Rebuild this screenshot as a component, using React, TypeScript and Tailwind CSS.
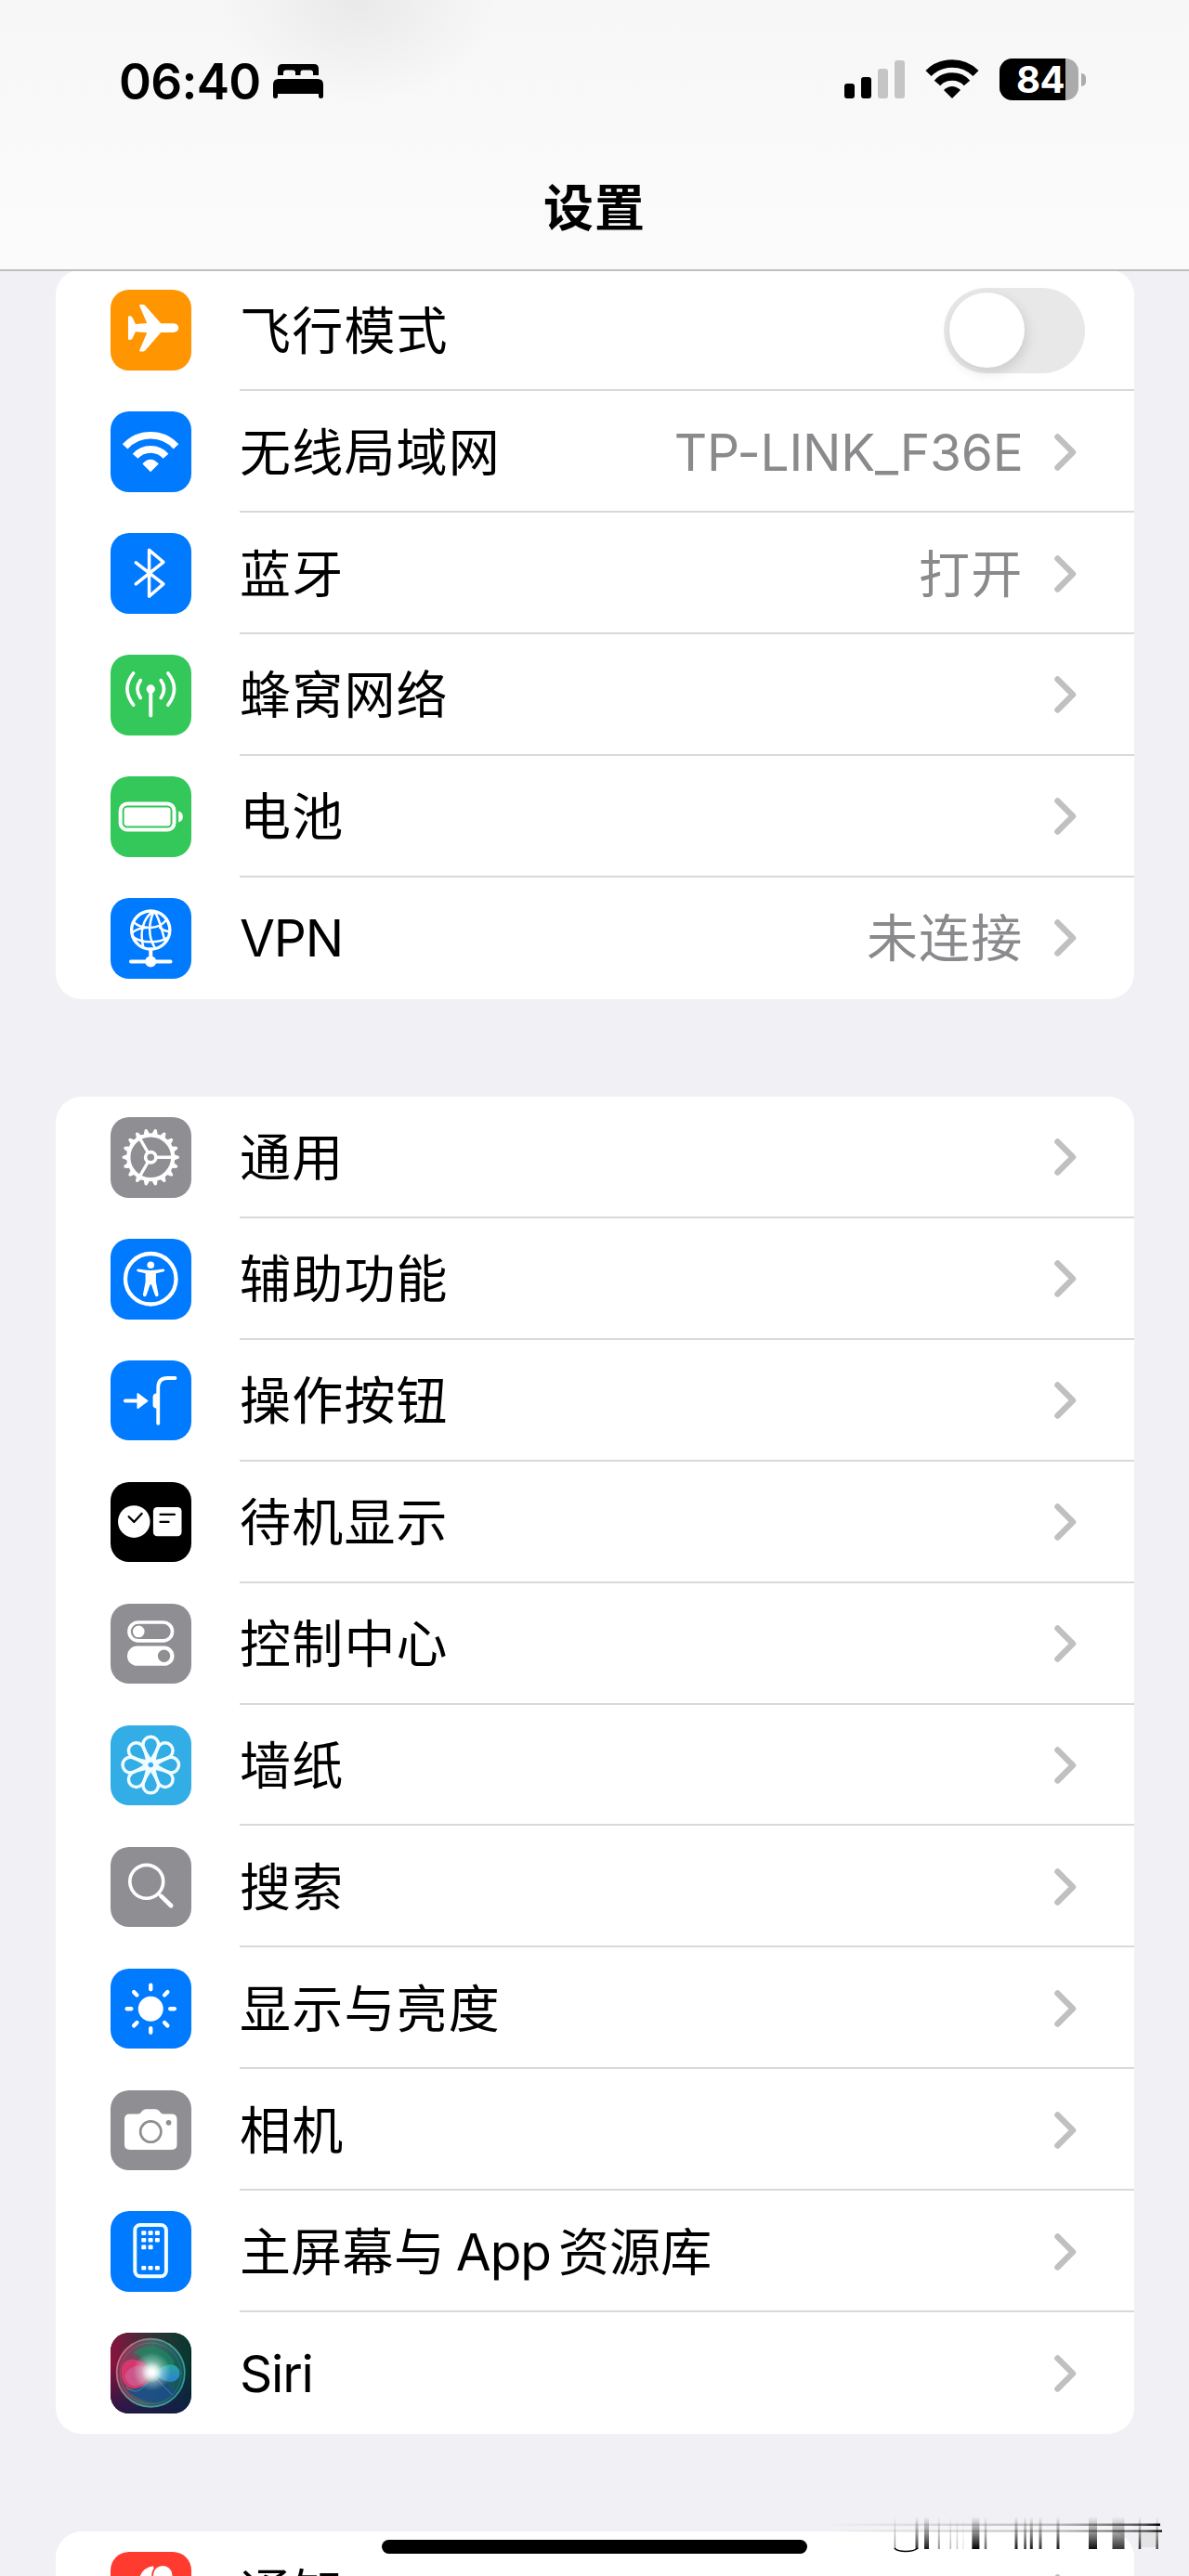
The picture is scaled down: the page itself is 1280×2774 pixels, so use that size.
import type { ReactNode } from "react";

const BLUE = "bg-[#007aff]";
const GREEN = "bg-[#34c759]";
const GRAY = "bg-[#8e8e93]";

function Tile({ color, children }: { color: string; children: ReactNode }) {
  return (
    <div className={`size-[86.5px] shrink-0 overflow-hidden rounded-[20px] ${color}`}>
      <svg viewBox="0 0 260 260" className="block size-full" fill="none" strokeLinecap="round" strokeLinejoin="round">
        {children}
      </svg>
    </div>
  );
}

const W = "#fff";

const Airplane = () => (
  <path
    fill={W}
    d="M204 109H163L112 51Q109 48 105 48H97Q92 48 94 53L118 108L81 111L71 90Q69 85 63 85H60Q57 85 57 89V158Q57 162 60 162H63Q69 162 71 157L81 136L118 139L94 195Q92 200 97 200H105Q109 200 112 197L163 138H204Q220 136 220 124Q220 111 204 109Z"
  />
);

const Wifi = () => (
  <>
    <g stroke={W} strokeWidth="23" strokeLinecap="butt">
      <path d="M47 114A111 111 0 0 1 212 114" />
      <path d="M80 145A66 66 0 0 1 179 145" />
    </g>
    <path fill={W} stroke={W} strokeWidth="4" d="M106 170Q129 145 153 170L129.500 193Z" />
  </>
);

const Bluetooth = () => <path stroke={W} strokeWidth="10.500" d="M82 96L171 165L125 205V55L171 94L82 165" />;

const Cellular = () => (
  <g stroke={W}>
    <circle cx="130" cy="111" r="14" fill={W} stroke="none" />
    <path strokeWidth="12" d="M130 115V197" />
    <path strokeWidth="11" d="M97 83Q77 111 97 140M163 83Q183 111 163 140" />
    <path strokeWidth="11" d="M74 60Q34 111 74 163M186 60Q226 111 186 163" />
  </g>
);

const Battery = () => (
  <>
    <rect x="32" y="89" width="174" height="84" rx="22" stroke={W} strokeWidth="12" />
    <rect x="44" y="101" width="150" height="60" rx="10" fill={W} />
    <path fill={W} d="M220 113Q234 117 234 131T220 149Z" />
  </>
);

const Vpn = () => (
  <g stroke={W}>
    <circle cx="130" cy="104" r="62" strokeWidth="10" />
    <g strokeWidth="7.500">
      <path d="M138 44C104 66 94 112 106 158" />
      <path d="M140 44C124 78 120 124 143 160" />
      <path d="M142 44C158 64 164 100 176 138" />
      <path d="M74 78C100 102 154 104 180 72" />
      <path d="M70 124C100 148 156 148 188 126" />
      <path d="M160 96Q176 108 188 108M70 112Q90 96 116 96" />
    </g>
    <path strokeWidth="12" d="M130 166V200M66 206H194" />
    <circle cx="130" cy="206" r="18" fill={W} stroke="none" />
  </g>
);

const TEETH = Array.from({ length: 18 }, (_, i) => i * 20);

const Gear = () => (
  <g stroke={W}>
    <circle cx="130" cy="130" r="72" strokeWidth="13" />
    {TEETH.map((a) => (
      <path key={a} transform={`rotate(${a} 130 130)`} d="M202 124H210L220 128V132L210 136H202Z" fill={W} stroke={W} strokeWidth="4" />
    ))}
    <circle cx="130" cy="130" r="17" strokeWidth="11" />
    {[0, 120, 240].map((a) => (
      <path key={a} transform={`rotate(${a} 130 130)`} d="M150 130H198" strokeWidth="10" strokeLinecap="butt" />
    ))}
  </g>
);

const Accessibility = () => (
  <>
    <circle cx="130" cy="130" r="82" stroke={W} strokeWidth="13" />
    <circle cx="130" cy="85" r="11.500" fill={W} />
    <path
      fill={W}
      d="M90 98Q110 102 130 102T170 98Q176 98 175 103Q175 106 170 107L147 112V140L155 180Q155 188 148 187Q145 186 143 180L132 148H128L117 180Q115 186 112 187Q105 188 105 180L113 140V112L90 107Q85 106 85 103Q84 98 90 98Z"
    />
  </>
);

const ActionButton = () => (
  <>
    <path stroke={W} strokeWidth="12" d="M48 131H92" />
    <path fill={W} stroke={W} strokeWidth="5" d="M88 108V154L119 131Z" />
    <path stroke={W} strokeWidth="11.500" d="M154 204V88Q154 57 184 57H209" />
    <path fill={W} d="M150 107H146Q137 110 137 118V144Q137 152 146 155H150Z" />
  </>
);

const Standby = () => (
  <>
    <circle cx="76" cy="128" r="52" fill={W} />
    <rect x="138" y="81" width="92" height="94" rx="13" fill={W} />
    <g stroke="#000" strokeWidth="7">
      <path d="M59 112L76 129L101 102" />
      <path d="M161 105H207M161 129H188" />
    </g>
  </>
);

const ControlCenter = () => (
  <>
    <rect x="60" y="60" width="140" height="60" rx="30" stroke={W} strokeWidth="11" />
    <circle cx="91" cy="90" r="19" fill={W} />
    <rect x="54" y="137" width="152" height="64" rx="32" fill={W} />
    <circle cx="173" cy="169" r="20" fill="#8e8e93" />
  </>
);

const PETALS = Array.from({ length: 8 }, (_, i) => i * 45);

const Wallpaper = () => (
  <g transform="translate(130 128)" stroke="#f0fcff" strokeWidth="10.500">
    {PETALS.map((a) => (
      <path key={a} transform={`rotate(${a})`} d="M0 -13C-10 -32 -25 -48 -25 -66A25 25 0 0 1 25 -66C25 -48 10 -32 0 -13Z" />
    ))}
    <circle r="13" strokeWidth="6" />
  </g>
);

const Search = () => (
  <g stroke={W}>
    <circle cx="116.500" cy="112" r="54" strokeWidth="11" />
    <path strokeWidth="9" d="M155 151L165 161" />
    <path strokeWidth="14" d="M164 159L196 190" />
  </g>
);

const Sun = () => (
  <>
    <circle cx="130" cy="130" r="40.500" fill={W} />
    {PETALS.map((a) => (
      <path key={a} transform={`rotate(${a} 130 130)`} stroke={W} strokeWidth="13" d="M130 67V53" />
    ))}
  </>
);

const Camera = () => (
  <>
    <path
      fill={W}
      d="M62 77H88Q94 77 98 72L103 66Q108 61 115 61H145Q152 61 157 66L162 72Q166 77 172 77H198Q215 77 215 94V175Q215 192 198 192H62Q45 192 45 175V94Q45 77 62 77Z"
    />
    <circle cx="130" cy="134" r="33.500" stroke="#8e8e93" strokeWidth="8" />
    <circle cx="188" cy="105" r="8.500" fill="#8e8e93" />
  </>
);

const DOTS = [
  [100, 64], [122, 64], [144, 64],
  [100, 87], [122, 87], [144, 87],
  [100, 110], [122, 110],
  [100, 177], [122, 177], [144, 177],
];

const HomeScreen = () => (
  <>
    <rect x="79" y="45" width="101" height="166" rx="17" stroke="#f0fcff" strokeWidth="12" />
    {DOTS.map(([x, y]) => (
      <rect key={`${x}-${y}`} x={x} y={y} width="15" height="14" rx="3" fill={W} />
    ))}
  </>
);

const Siri = () => (
  <>
    <defs>
      <linearGradient id="siriBase" x1="0" y1="0" x2="1" y2="0">
        <stop offset="0" stopColor="#8a123f" />
        <stop offset=".45" stopColor="#3a3038" />
        <stop offset="1" stopColor="#04392f" />
      </linearGradient>
      <linearGradient id="siriShade" x1="0" y1="0" x2="0" y2="1">
        <stop offset=".4" stopColor="#0a1238" stopOpacity="0" />
        <stop offset="1" stopColor="#14174f" stopOpacity=".8" />
      </linearGradient>
      <linearGradient id="siriOrb" x1="0" y1=".4" x2="1" y2=".6">
        <stop offset="0" stopColor="#a8345e" />
        <stop offset=".45" stopColor="#4d7d78" />
        <stop offset="1" stopColor="#0d6468" />
      </linearGradient>
      <linearGradient id="siriRing" x1="0" y1=".2" x2="1" y2=".7">
        <stop offset="0" stopColor="#e8708a" />
        <stop offset=".5" stopColor="#5fae9a" />
        <stop offset="1" stopColor="#3aa5b5" />
      </linearGradient>
      <linearGradient id="siriBlue" x1="0" y1="0" x2="0" y2="1">
        <stop offset="0" stopColor="#2aa8a0" />
        <stop offset="1" stopColor="#2c84d8" />
      </linearGradient>
      <radialGradient id="siriGlow">
        <stop offset="0" stopColor="#fff" />
        <stop offset=".3" stopColor="#fff" stopOpacity=".85" />
        <stop offset="1" stopColor="#c8fff0" stopOpacity="0" />
      </radialGradient>
    </defs>
    <rect width="260" height="260" fill="url(#siriBase)" />
    <rect width="260" height="260" fill="url(#siriShade)" />
    <circle cx="130" cy="130" r="110" fill="url(#siriOrb)" opacity=".7" />
    <path d="M72 64Q130 20 190 72Q226 108 180 112L130 128Q110 76 72 64Z" fill="#159061" opacity=".6" />
    <path d="M56 190Q110 170 160 150L212 190Q150 262 56 190Z" fill="#1a4d88" opacity=".85" />
    <path d="M134 128C112 84 44 68 36 116C30 160 52 180 82 180C110 180 124 150 134 128Z" fill="#e0356f" opacity=".9" />
    <path d="M134 128C112 96 60 100 46 140C60 186 100 186 134 128Z" fill="#c08fc0" opacity=".35" />
    <path d="M134 132C160 116 184 96 208 106C234 120 226 154 202 158C178 162 160 146 134 132Z" fill="url(#siriBlue)" opacity=".95" />
    <circle cx="130" cy="130" r="110" stroke="url(#siriRing)" strokeWidth="5" opacity=".85" />
    <circle cx="130" cy="132" r="99" stroke="#7ad0be" strokeWidth="2" opacity=".3" />
    <path d="M52 176Q92 218 134 134L198 200" stroke="#8bb8e8" strokeWidth="3" opacity=".45" />
    <circle cx="134" cy="126" r="62" fill="url(#siriGlow)" opacity=".75" />
    <circle cx="134" cy="128" r="34" fill="url(#siriGlow)" />
  </>
);

const Bell = () => (
  <>
    <path fill={W} d="M70 200Q84 140 92 90Q100 52 138 46L156 104V200Z" />
    <circle cx="169" cy="76" r="36" fill="#ff3b30" />
    <circle cx="169" cy="76" r="31" fill={W} />
  </>
);

type Item = { label: string; color: string; icon: ReactNode; value?: string; toggle?: boolean };

const connectivity: Item[] = [
  { label: "飞行模式", color: "bg-[#ff9500]", icon: <Airplane />, toggle: true },
  { label: "无线局域网", color: BLUE, icon: <Wifi />, value: "TP-LINK_F36E" },
  { label: "蓝牙", color: BLUE, icon: <Bluetooth />, value: "打开" },
  { label: "蜂窝网络", color: GREEN, icon: <Cellular /> },
  { label: "电池", color: GREEN, icon: <Battery /> },
  { label: "VPN", color: BLUE, icon: <Vpn />, value: "未连接" },
];

const general: Item[] = [
  { label: "通用", color: GRAY, icon: <Gear /> },
  { label: "辅助功能", color: BLUE, icon: <Accessibility /> },
  { label: "操作按钮", color: BLUE, icon: <ActionButton /> },
  { label: "待机显示", color: "bg-black", icon: <Standby /> },
  { label: "控制中心", color: GRAY, icon: <ControlCenter /> },
  { label: "墙纸", color: "bg-[#32ade6]", icon: <Wallpaper /> },
  { label: "搜索", color: GRAY, icon: <Search /> },
  { label: "显示与亮度", color: BLUE, icon: <Sun /> },
  { label: "相机", color: GRAY, icon: <Camera /> },
  { label: "主屏幕与 App 资源库", color: BLUE, icon: <HomeScreen /> },
  { label: "Siri", color: "bg-black", icon: <Siri /> },
];

const notifications: Item[] = [{ label: "通知", color: "bg-[#ff3b30]", icon: <Bell /> }];

function Label({ text }: { text: string }) {
  if (text.includes("App")) {
    const [before, after] = text.split(" App ");
    return (
      <span className="flex whitespace-nowrap">
        <span className="tracking-[0.3px]">{before}</span>
        <span className="ml-[11.5px] mr-[8px] tracking-[-1px]">App</span>
        <span className="tracking-[0.1px]">{after}</span>
      </span>
    );
  }
  const latin = /^[A-Za-z]/.test(text);
  return <span className={`whitespace-nowrap ${latin ? "tracking-[-1.2px]" : "tracking-[1.2px]"}`}>{text}</span>;
}

function Chevron() {
  return (
    <svg viewBox="0 0 24 40" className="ml-[33px] mr-[62.5px] h-[40px] w-[24px]" fill="none" stroke="#c0c0c2" strokeWidth="6.500" strokeLinecap="round" strokeLinejoin="round">
      <path d="M3.500 3.500L20 20L3.500 36.500" />
    </svg>
  );
}

function Toggle() {
  return (
    <div className="mr-[53.5px] flex h-[92px] w-[152px] items-center rounded-full bg-[#e8e8e9] px-[6px]">
      <div className="size-[81px] rounded-full bg-white shadow-[2px_5px_14px_rgba(0,0,0,0.13)]" />
    </div>
  );
}

function Row({ item, last }: { item: Item; last: boolean }) {
  const latinValue = item.value?.startsWith("TP");
  return (
    <div className="flex h-[130.93px] pl-[59px]">
      <div className="flex items-center">
        <Tile color={item.color}>{item.icon}</Tile>
      </div>
      <div className={`ml-[52.5px] flex flex-1 items-center text-[55px] leading-[80px] text-black ${last ? "" : "border-b-2 border-[#d9d9db] pt-[2px]"}`}>
        <Label text={item.label} />
        <div className="ml-auto flex items-center">
          {item.value && <span className={`whitespace-nowrap text-[#8a8a8d] ${latinValue ? "tracking-[-0.2px]" : "tracking-[1.2px]"}`}>{item.value}</span>}
          {item.toggle ? <Toggle /> : <Chevron />}
        </div>
      </div>
    </div>
  );
}

function Card({ items }: { items: Item[] }) {
  return (
    <section className="rounded-[28px] bg-white">
      {items.map((item, i) => (
        <Row key={item.label} item={item} last={i === items.length - 1} />
      ))}
    </section>
  );
}

function StatusBar() {
  return (
    <div className="flex h-[174px] items-start">
      <div className="ml-[128px] mt-[57.5px] w-[152px] whitespace-nowrap text-[53px] font-semibold leading-[60px] tracking-[-0.7px] text-black">06:40</div>
      <svg viewBox="0 0 54 37" className="ml-[14px] mt-[69px] h-[37px] w-[54px]" fill="#000">
        <path d="M5 12V5Q5 0 10 0H44Q49 0 49 5V12H43V9Q43 6.500 40 6.500H32Q29.500 6.500 29.500 9V12H24V9Q24 6.500 21 6.500H14Q11 6.500 11 9V12Z" />
        <path d="M0 22Q0 16 6 16H48Q54 16 54 22V35Q54 37 51.500 37T49 35V32H5V35Q5 37 2.500 37T0 35Z" />
      </svg>
      <div className="ml-auto mt-[65px] flex h-[41px] items-end gap-[7px]">
        <div className="h-[16px] w-[11px] rounded-[3px] bg-black" />
        <div className="h-[23px] w-[11px] rounded-[3px] bg-black" />
        <div className="h-[32px] w-[11px] rounded-[3px] bg-[#c5c5c6]" />
        <div className="h-[41px] w-[11px] rounded-[3px] bg-[#c5c5c6]" />
      </div>
      <svg viewBox="0 0 58 42" className="ml-[22px] mt-[64px] h-[42px] w-[58px]" fill="none" stroke="#000" strokeWidth="8.500">
        <path d="M3.500 15Q14 4.500 29 4.500T54.500 15" />
        <path d="M13 25.500Q19 18.500 29 18.500T45 25.500" />
        <path d="M20 33Q29 25 38 33L29 42Z" fill="#000" stroke="none" />
      </svg>
      <div className="ml-[22px] mt-[63px] flex h-[45px] w-[85px] items-center rounded-[14px] bg-[#ababac]">
        <div className="flex h-[45px] w-[71px] items-center justify-end rounded-l-[14px] bg-black pr-[1px] text-[40px] font-bold leading-[48px] tracking-[-0.5px] text-white">84</div>
      </div>
      <div className="ml-[3px] mr-[111px] mt-[79px] h-[14px] w-[5px] rounded-r-full bg-[#ababac]" />
    </div>
  );
}

function Header() {
  return (
    <header className="relative z-10 h-[292px] border-b-2 border-[#bfbfc1] bg-[radial-gradient(ellipse_150px_110px_at_385px_0px,#e9e9e9_0%,#efefef_40%,transparent_100%),linear-gradient(to_bottom,#f7f7f8,#fbfbfc)]">
      <StatusBar />
      <h1 className="pt-[1px] text-center text-[54px] font-bold leading-[100px] tracking-[1px] text-black">设置</h1>
    </header>
  );
}

const STREAKS = [
  [963.4, 1.5, 0.45], [987, 3, 0.8], [997.5, 5, 0.9], [1010.8, 2, 0.45], [1023.3, 1.5, 0.3], [1030.4, 1.5, 0.25], [1037, 1.5, 0.1],
  [1050.4, 8, 1], [1061, 2.5, 0.6], [1094, 3, 0.9], [1103.6, 2.5, 0.8], [1110.3, 3, 0.9], [1120, 3, 0.8], [1139, 3, 0.9],
  [1176.5, 9, 0.95], [1204, 13, 0.8], [1227, 2.5, 0.8], [1245.7, 2.5, 0.7],
];

/* Vertical and horizontal fading streaks in the lower right corner. */
function Streaks() {
  return (
    <svg viewBox="880 2700 400 60" className="absolute bottom-[14px] right-0 h-[60px] w-[400px]">
      <defs>
        <linearGradient id="fadeY" x1="0" y1="0" x2="0" y2="1">
          <stop offset="0" stopColor="#000" stopOpacity="0" />
          <stop offset=".45" stopColor="#000" stopOpacity=".4" />
          <stop offset="1" stopColor="#000" />
        </linearGradient>
        <linearGradient id="fadeX" x1="0" y1="0" x2="1" y2="0">
          <stop offset="0" stopColor="#000" stopOpacity="0" />
          <stop offset=".7" stopColor="#000" stopOpacity=".25" />
          <stop offset=".95" stopColor="#000" stopOpacity=".65" />
          <stop offset="1" stopColor="#000" />
        </linearGradient>
        <linearGradient id="haze" x1="0" y1="0" x2="1" y2="0">
          <stop offset="0" stopColor="#fff" stopOpacity="0" />
          <stop offset=".5" stopColor="#fff" stopOpacity=".35" />
          <stop offset="1" stopColor="#fff" stopOpacity=".35" />
        </linearGradient>
      </defs>
      <rect x="900" y="2717" width="320" height="10" fill="url(#haze)" />
      <rect x="1227" y="2726" width="19" height="17" fill="#e3e3e4" />
      {STREAKS.map(([x, w, o]) => (
        <rect key={x} x={x - w / 2} y="2710" width={w} height="35" fill="url(#fadeY)" opacity={o} />
      ))}
      <path d="M963 2744Q966 2747.500 975 2747.500T988 2744" fill="none" stroke="#000" strokeWidth="1.600" />
      <rect x="890" y="2717.500" width="359" height="2.500" fill="url(#fadeX)" />
      <rect x="890" y="2724.500" width="361" height="2.200" fill="url(#fadeX)" />
    </svg>
  );
}

export default function App() {
  return (
    <div className="relative h-[2774px] w-[1280px] overflow-hidden bg-[#f1f1f5] font-['Inter','Noto_Sans_CJK_SC',sans-serif]">
      <Header />
      <main className="-mt-[1.8px] ml-[60px] flex w-[1161px] flex-col gap-[105.2px]">
        <Card items={connectivity} />
        <Card items={general} />
        <Card items={notifications} />
      </main>
      <Streaks />
      <div className="absolute bottom-[24px] left-[411px] h-[15px] w-[458px] rounded-full bg-black" />
    </div>
  );
}
